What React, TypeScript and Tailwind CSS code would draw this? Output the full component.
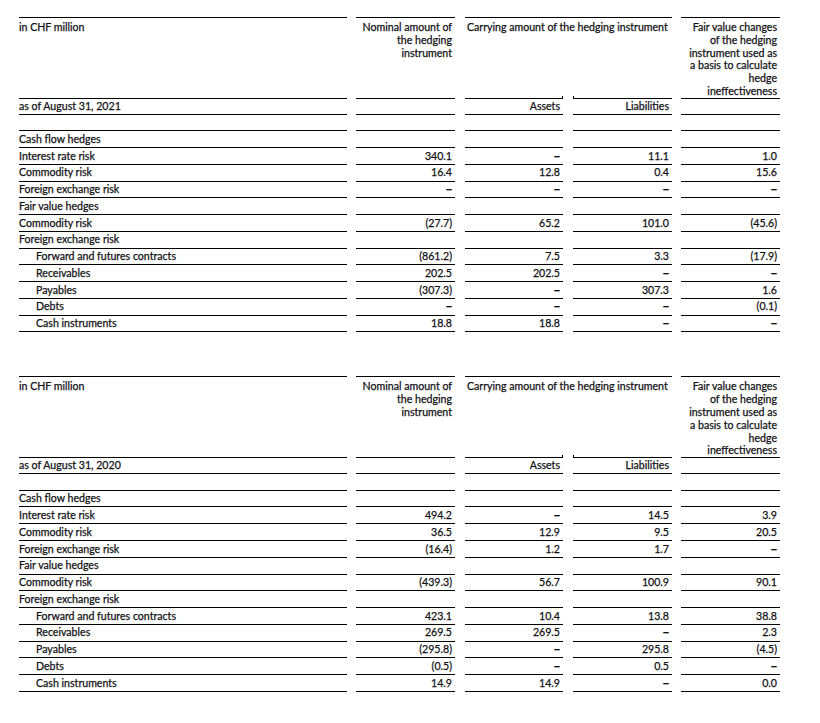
import React from "react";

type Row = { label: string; indent?: boolean; values?: string[] };

const font = { fontFamily: "Lato, 'Open Sans', sans-serif" };

const table2021: Row[] = [
  { label: "" },
  { label: "Cash flow hedges" },
  { label: "Interest rate risk", values: ["340.1", "–", "11.1", "1.0"] },
  { label: "Commodity risk", values: ["16.4", "12.8", "0.4", "15.6"] },
  { label: "Foreign exchange risk", values: ["–", "–", "–", "–"] },
  { label: "Fair value hedges" },
  { label: "Commodity risk", values: ["(27.7)", "65.2", "101.0", "(45.6)"] },
  { label: "Foreign exchange risk" },
  { label: "Forward and futures contracts", indent: true, values: ["(861.2)", "7.5", "3.3", "(17.9)"] },
  { label: "Receivables", indent: true, values: ["202.5", "202.5", "–", "–"] },
  { label: "Payables", indent: true, values: ["(307.3)", "–", "307.3", "1.6"] },
  { label: "Debts", indent: true, values: ["–", "–", "–", "(0.1)"] },
  { label: "Cash instruments", indent: true, values: ["18.8", "18.8", "–", "–"] },
];

const table2020: Row[] = [
  { label: "" },
  { label: "Cash flow hedges" },
  { label: "Interest rate risk", values: ["494.2", "–", "14.5", "3.9"] },
  { label: "Commodity risk", values: ["36.5", "12.9", "9.5", "20.5"] },
  { label: "Foreign exchange risk", values: ["(16.4)", "1.2", "1.7", "–"] },
  { label: "Fair value hedges" },
  { label: "Commodity risk", values: ["(439.3)", "56.7", "100.9", "90.1"] },
  { label: "Foreign exchange risk" },
  { label: "Forward and futures contracts", indent: true, values: ["423.1", "10.4", "13.8", "38.8"] },
  { label: "Receivables", indent: true, values: ["269.5", "269.5", "–", "2.3"] },
  { label: "Payables", indent: true, values: ["(295.8)", "–", "295.8", "(4.5)"] },
  { label: "Debts", indent: true, values: ["(0.5)", "–", "0.5", "–"] },
  { label: "Cash instruments", indent: true, values: ["14.9", "14.9", "–", "0.0"] },
];

// value column widths + left gaps
const valueCols = [
  "w-[99px] ml-[9px]",
  "w-[98px] ml-[10px]",
  "w-[99px] ml-[10px]",
  "w-[99px] ml-[9px]",
];

function Value({ v }: { v: string }) {
  // Lato's en dash is short; the source uses a wider one
  if (v === "–") return <span className="font-['Liberation_Sans',sans-serif] font-bold">–</span>;
  return <>{v}</>;
}

function DataRow({ row }: { row: Row }) {
  return (
    <div className="flex h-[16.77px]">
      <div
        className={
          "w-[328px] border-b border-black flex items-center " +
          (row.indent ? "pl-[17px]" : "")
        }
      >
        {row.label}
      </div>
      {valueCols.map((c, i) => (
        <div key={i} className={c + " border-b border-black flex items-center justify-end pr-[3px]"}>
          {row.values ? <Value v={row.values[i]} /> : ""}
        </div>
      ))}
    </div>
  );
}

function HedgeTable({ date, rows }: { date: string; rows: Row[] }) {
  return (
    <div className="flex flex-col">
      {/* header */}
      <div className="flex h-[82px]">
        <div className="w-[328px] border-y border-black pt-[3px]">in CHF million</div>
        <div className="w-[99px] ml-[9px] border-y border-black pt-[3px] pr-[3px] text-right">
          Nominal amount of
          <br />
          the hedging
          <br />
          instrument
        </div>
        <div className="w-[207px] ml-[10px] border-t border-black flex flex-col">
          <div className="flex-1 pt-[3px] pl-[2px]">Carrying amount of the hedging instrument</div>
          <div className="flex h-[3px]">
            <div className="w-[98px] border-b border-r border-black" />
            <div className="w-[99px] ml-[10px] border-b border-l border-black" />
          </div>
        </div>
        <div className="w-[99px] ml-[9px] border-y border-black pt-[3px] pr-[3px] text-right whitespace-nowrap flex flex-col items-end">
          <span>Fair value changes</span>
          <span>of the hedging</span>
          <span>instrument used as</span>
          <span>a basis to calculate</span>
          <span>hedge</span>
          <span>ineffectiveness</span>
        </div>
      </div>
      {/* date row */}
      <div className="flex h-[15.5px]">
        <div className="w-[328px] border-b border-black flex items-center">{date}</div>
        <div className="w-[99px] ml-[9px] border-b border-black" />
        <div className="w-[98px] ml-[10px] border-b border-black flex items-center justify-end pr-[3px]">Assets</div>
        <div className="w-[99px] ml-[10px] border-b border-black flex items-center justify-end pr-[3px]">Liabilities</div>
        <div className="w-[99px] ml-[9px] border-b border-black" />
      </div>
      {rows.map((r, i) => (
        <DataRow key={i} row={r} />
      ))}
    </div>
  );
}

export default function App() {
  return (
    <div
      className="w-[820px] h-[723px] bg-white pl-[19px] pt-[17px] text-[10.6px] leading-[12.8px] text-[#111114] [-webkit-text-stroke:0.25px_#111114] overflow-hidden"
      style={font}
    >
      <div className="flex flex-col gap-[44px]">
        <HedgeTable date="as of August 31, 2021" rows={table2021} />
        <HedgeTable date="as of August 31, 2020" rows={table2020} />
      </div>
    </div>
  );
}
